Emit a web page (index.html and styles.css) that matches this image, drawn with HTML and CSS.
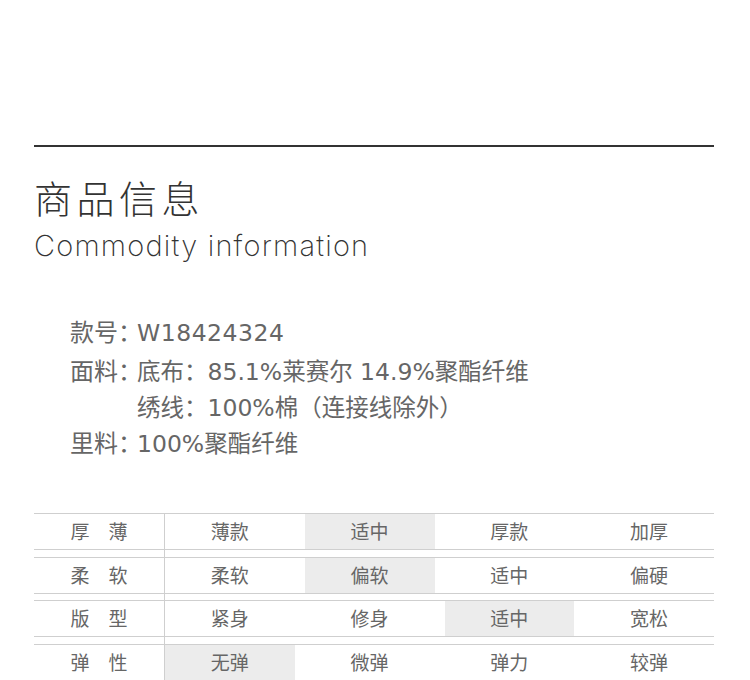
FILE: index.html
```html
<!DOCTYPE html>
<html lang="zh-CN">
<head>
<meta charset="utf-8">
<title>商品信息</title>
<link rel="stylesheet" href="styles.css">
</head>
<body>
<div class="page">
  <div class="rule"></div>
  <h1 class="title">商品信息</h1>
  <div class="subtitle">Commodity information</div>

  <div class="info">
    <div class="info-row first">
      <span class="label">款号：</span>
      <div class="value"><div class="code">W18424324</div></div>
    </div>
    <div class="info-row">
      <span class="label">面料：</span>
      <div class="value">
        <div>底布：85.1%莱赛尔 14.9%聚酯纤维</div>
        <div>绣线：100%棉（连接线除外）</div>
      </div>
    </div>
    <div class="info-row">
      <span class="label">里料：</span>
      <div class="value"><div>100%聚酯纤维</div></div>
    </div>
  </div>

  <div class="table">
    <div class="row">
      <div class="cell head">厚　薄</div>
      <div class="vals">
        <div class="cell">薄款</div>
        <div class="cell on">适中</div>
        <div class="cell">厚款</div>
        <div class="cell">加厚</div>
      </div>
    </div>
    <div class="row">
      <div class="cell head">柔　软</div>
      <div class="vals">
        <div class="cell">柔软</div>
        <div class="cell on">偏软</div>
        <div class="cell">适中</div>
        <div class="cell">偏硬</div>
      </div>
    </div>
    <div class="row">
      <div class="cell head">版　型</div>
      <div class="vals">
        <div class="cell">紧身</div>
        <div class="cell">修身</div>
        <div class="cell on">适中</div>
        <div class="cell">宽松</div>
      </div>
    </div>
    <div class="row">
      <div class="cell head">弹　性</div>
      <div class="vals">
        <div class="cell on">无弹</div>
        <div class="cell">微弹</div>
        <div class="cell">弹力</div>
        <div class="cell">较弹</div>
      </div>
    </div>
  </div>
</div>
</body>
</html>
```

FILE: styles.css
```css
html, body {
  margin: 0;
  padding: 0;
  background: #fff;
}

.page {
  width: 680px;
  padding: 145px 0 0 34px;
  font-family: "Liberation Sans", "Noto Sans CJK SC", sans-serif;
}

.rule {
  height: 0;
  border-top: 2px solid #333;
}

.title {
  margin: 28px 0 0 0;
  font-family: "Noto Sans CJK SC", sans-serif;
  font-size: 38px;
  font-weight: 300;
  line-height: 44px;
  letter-spacing: 4.5px;
  color: #333;
}

.subtitle {
  margin-top: 9px;
  font-family: Inter, "Liberation Sans", sans-serif;
  font-weight: 200;
  font-size: 29px;
  line-height: 36px;
  letter-spacing: 1.2px;
  color: #333;
}

.info {
  margin-top: 51px;
  padding-left: 36px;
  color: #666;
  font-family: "DejaVu Sans", "Noto Sans CJK SC", sans-serif;
  font-size: 23.5px;
  line-height: 36px;
}

.info-row {
  display: flex;
}

.info-row.first {
  margin-bottom: 3px;
}

.label {
  width: 67px;
  flex: none;
  white-space: nowrap;
  font-size: 24px;
}

.value {
  white-space: nowrap;
}

.code {
  letter-spacing: 0.5px;
}

.table {
  margin-top: 51px;
  display: flex;
  flex-direction: column;
  gap: 6.5px;
  background: linear-gradient(#cfcfcf, #cfcfcf) 130px 0 / 1px 100% no-repeat;
  font-family: "Noto Sans CJK SC", sans-serif;
  font-size: 19px;
  color: #666;
}

.row {
  display: flex;
  height: 35px;
  border-top: 1px solid #cfcfcf;
  border-bottom: 1px solid #cfcfcf;
}

.cell {
  display: flex;
  align-items: center;
  justify-content: center;
  height: 35px;
  padding-bottom: 2px;
  box-sizing: border-box;
}

.cell.head {
  width: 131px;
  flex: none;
  padding-right: 1px;
}

.vals {
  flex: 1;
  display: flex;
  gap: 10px;
}

.vals .cell {
  flex: 1;
}

.cell.on {
  background: #ececec;
}
```
